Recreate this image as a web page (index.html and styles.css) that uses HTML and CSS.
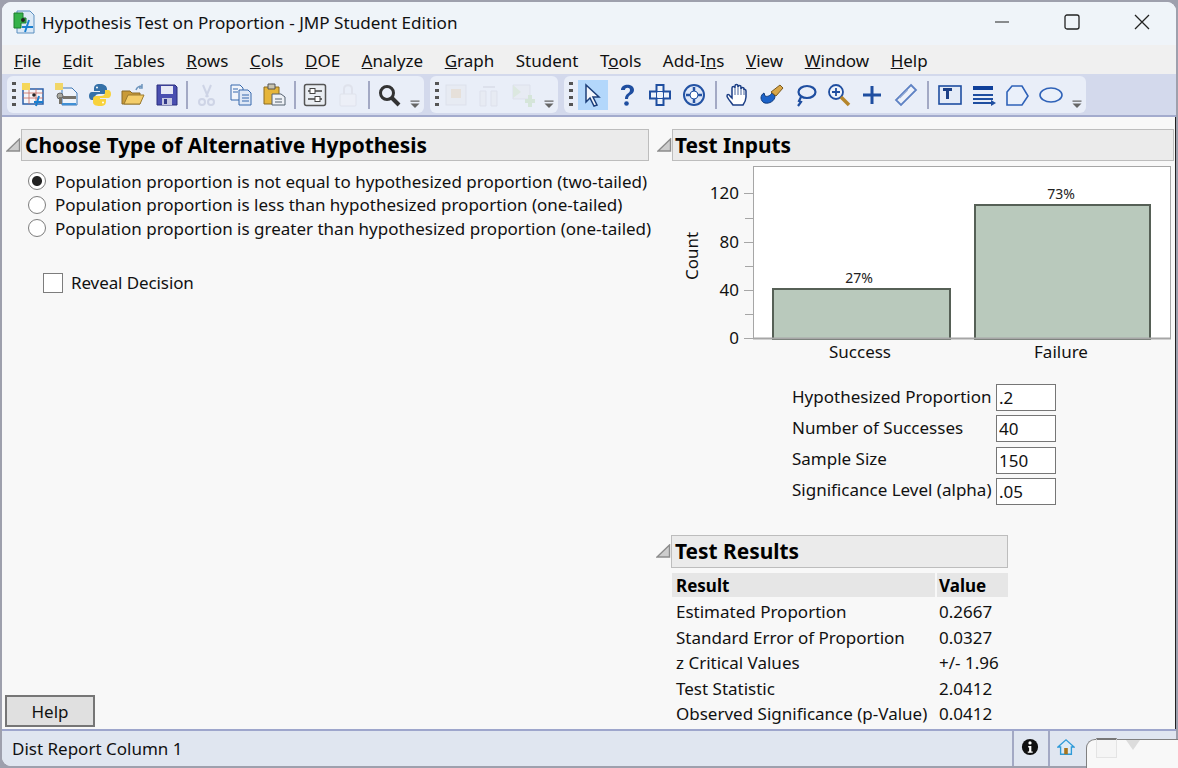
FILE: index.html
```html
<!DOCTYPE html>
<html lang="en">
<head>
<meta charset="utf-8">
<title>Hypothesis Test on Proportion - JMP Student Edition</title>
<link rel="stylesheet" href="styles.css">
</head>
<body>
<div class="window">
  <header class="titlebar">
    <svg class="app-icon" viewBox="0 0 24 24"><path d="M5 1h13l4 4v18H5z" fill="#dbe9f6" stroke="#5b8fc0"/><path d="M2 3h9v5h3v5H9v5H2z" fill="#35b24a" stroke="#1c7d2f"/><circle cx="11" cy="10" r="2" fill="#222"/><path d="M17 10l-4 12M10 17h11" stroke="#1a7fd0" stroke-width="2"/></svg>
    <span class="title">Hypothesis Test on Proportion - JMP Student Edition</span>
    <div class="winctl">
      <svg viewBox="0 0 16 16"><path d="M1 8h14" stroke="#222" stroke-width="1.200"/></svg>
      <svg viewBox="0 0 16 16"><rect x="1" y="1" width="14" height="14" rx="2" fill="none" stroke="#222" stroke-width="1.300"/></svg>
      <svg viewBox="0 0 16 16"><path d="M1 1l14 14M15 1L1 15" stroke="#222" stroke-width="1.300"/></svg>
    </div>
  </header>
  <nav class="menubar">
    <span><u>F</u>ile</span><span><u>E</u>dit</span><span><u>T</u>ables</span><span><u>R</u>ows</span><span><u>C</u>ols</span><span><u>D</u>OE</span><span><u>A</u>nalyze</span><span><u>G</u>raph</span><span>Student</span><span>T<u>o</u>ols</span><span>Add-I<u>n</u>s</span><span><u>V</u>iew</span><span><u>W</u>indow</span><span><u>H</u>elp</span>
  </nav>
  <div class="toolbar">
    <div class="tb-group g1">
      <i class="grip"></i>
      <span class="tool"><svg viewBox="0 0 24 24"><path d="M2 6h20v15H2z" fill="#f4f6fb" stroke="#2b5fa8" stroke-width="1.500"/><path d="M2 10h20M2 15h20M8 6v15M15 6v15" stroke="#c96a5a" stroke-width=".8"/><path d="M1 0h8v7H1z" fill="#f5d75a"/><circle cx="13" cy="12" r="1.800" fill="#222"/><path d="M18 13l-3 10M13 19h9" stroke="#1a7fd0" stroke-width="2"/></svg></span>
      <span class="tool"><svg viewBox="0 0 24 24"><path d="M8 5h10l5 5v12H8z" fill="#eef3fa" stroke="#3f78b5"/><path d="M1 0h8v7H1z" fill="#f1d668"/><circle cx="6" cy="13" r="3" fill="#a8a8a0" stroke="#666"/><path d="M5 14v7h3v-7zM9 13h13v3H9z" fill="#77736a"/><path d="M8 20h14v2H8z" fill="#3f8fd5"/></svg></span>
      <span class="tool"><svg viewBox="0 0 24 24"><path d="M12 1c-5 0-6 2-6 5v2h6v1H4c-2 0-3 2-3 4s1 4 3 4h3v-3c0-2 2-3 4-3h5c2 0 3-1 3-3V6c0-3-3-5-7-5z" fill="#3470a8"/><path d="M12 23c5 0 6-2 6-5v-2h-6v-1h8c2 0 3-2 3-4s-1-4-3-4h-3v3c0 2-2 3-4 3H8c-2 0-3 1-3 3v3c0 3 3 4 7 4z" fill="#f8d23c"/><circle cx="9" cy="4.500" r="1" fill="#fff"/><circle cx="15" cy="19.500" r="1" fill="#fff"/></svg></span>
      <span class="tool"><svg viewBox="0 0 24 24"><path d="M1 8h8l2 2h8v11H1z" fill="#c99a38" stroke="#8a6a28"/><path d="M3 21l4-9h16l-4 9z" fill="#f4cd6a" stroke="#9a7a30"/><path d="M15 7c1-3 3-4 6-4M21 1v4h-3" fill="none" stroke="#6e95bd" stroke-width="1.500"/></svg></span>
      <span class="tool"><svg viewBox="0 0 24 24"><path d="M2 2h18l2 2v18H2z" fill="#4a4fb0" stroke="#2b2f7c"/><path d="M6 3h12v8H6z" fill="#e6e8f5"/><path d="M7 15h10v7H7z" fill="#c5c7e0"/><path d="M9 16h3v5H9z" fill="#333a88"/></svg></span>
      <i class="sep"></i>
      <span class="tool dim"><svg viewBox="0 0 24 24"><path d="M8 2l5 12M16 2l-5 12" stroke="#c5cce0" stroke-width="2"/><circle cx="7" cy="19" r="3" fill="none" stroke="#c5cce0" stroke-width="2"/><circle cx="16" cy="19" r="3" fill="none" stroke="#c5cce0" stroke-width="2"/></svg></span>
      <span class="tool"><svg viewBox="0 0 24 24"><path d="M2 2h9l3 3v12H2z" fill="#f2f5fb" stroke="#3768ad"/><path d="M10 7h9l3 3v12H10z" fill="#dfe8f6" stroke="#3768ad"/><path d="M13 12h7M13 15h7M13 18h7M4 6h5M4 9h5" stroke="#3768ad"/></svg></span>
      <span class="tool"><svg viewBox="0 0 24 24"><path d="M2 4h15v17H2z" fill="#e6b53a" stroke="#8a6a20"/><path d="M6 1h7v5H6z" fill="#c9c4b0" stroke="#555"/><path d="M10 11h9l4 3v8H10z" fill="#eef1f6" stroke="#55606e"/><path d="M13 16h7M13 19h7" stroke="#55606e"/></svg></span>
      <i class="sep"></i>
      <span class="tool"><svg viewBox="0 0 24 24"><rect x="1.500" y="1.500" width="21" height="21" rx="2" fill="#e9edf2" stroke="#555" stroke-width="1.500"/><path d="M5 8h14M5 16h14" stroke="#444" stroke-width="1.500"/><rect x="7" y="5.500" width="5" height="5" fill="#fff" stroke="#444"/><rect x="12" y="13.500" width="5" height="5" fill="#fff" stroke="#444"/></svg></span>
      <span class="tool dim"><svg viewBox="0 0 24 24"><rect x="4" y="11" width="16" height="12" rx="1" fill="#edf0f7" stroke="#dcdfe8"/><path d="M8 11V6c0-5 8-5 8 0v5" fill="none" stroke="#dcdfe8" stroke-width="2"/></svg></span>
      <i class="sep"></i>
      <span class="tool"><svg viewBox="0 0 24 24"><circle cx="10" cy="10" r="6.500" fill="none" stroke="#333" stroke-width="3"/><path d="M15 15l7 7" stroke="#333" stroke-width="4"/></svg></span>
      <svg class="drop" viewBox="0 0 10 8"><path d="M1 1h8" stroke="#666"/><path d="M1 3h8L5 7z" fill="#666"/></svg>
    </div>
    <div class="tb-group g2">
      <i class="grip"></i>
      <span class="tool dim"><svg viewBox="0 0 24 24"><rect x="2" y="2" width="20" height="20" fill="#e7eaf2" stroke="#d9dde8"/><rect x="7" y="6" width="10" height="9" fill="#e6dcd0"/></svg></span>
      <span class="tool dim"><svg viewBox="0 0 24 24"><path d="M3 8h6v15H3zM14 8h6v15h-6z" fill="#e7eaf2" stroke="#d9dde8"/><path d="M6 4h12" stroke="#d9dde8" stroke-width="2"/></svg></span>
      <span class="tool dim"><svg viewBox="0 0 24 24"><path d="M2 2h17v14H2z" fill="#e7eaf2" stroke="#d9dde8"/><path d="M2 2l8 7-8 6z" fill="#d8e6d8"/><path d="M17 12h4v4h3v4h-3v4h-4v-4h-3v-4h3z" fill="#cfe3cf"/></svg></span>
      <svg class="drop" viewBox="0 0 10 8"><path d="M1 1h8" stroke="#666"/><path d="M1 3h8L5 7z" fill="#666"/></svg>
    </div>
    <div class="tb-group g3">
      <i class="grip"></i>
      <span class="tool selected"><svg viewBox="0 0 24 24"><path d="M5 2v17l4-4 4 8 3-1-4-8h6z" fill="#f4f6fb" stroke="#1c3f7a" stroke-width="1.500"/></svg></span>
      <span class="tool"><svg viewBox="0 0 24 24"><path d="M6 7c0-7 13-7 13 0 0 5-6 4-6 9h-3c0-6 5-5 5-9 0-3-5-3-5 0z" fill="#1f4ea0"/><circle cx="11.500" cy="20.500" r="2.300" fill="#1f4ea0"/></svg></span>
      <span class="tool"><svg viewBox="0 0 24 24"><path d="M8.500 2h7v6.500H22v7h-6.500V22h-7v-6.500H2v-7h6.500z" fill="#eef3fb" stroke="#1f4ea0" stroke-width="2"/><path d="M8.500 8.500h7v7h-7z" fill="none" stroke="#1f4ea0"/></svg></span>
      <span class="tool"><svg viewBox="0 0 24 24"><circle cx="12" cy="12" r="10" fill="#dfe8f8" stroke="#2453a4" stroke-width="2"/><path d="M12 4v16M4 12h16" stroke="#2453a4" stroke-width="2.500"/><circle cx="12" cy="12" r="4" fill="#fff" stroke="#2453a4"/></svg></span>
      <i class="sep wide"></i>
      <span class="tool"><svg viewBox="0 0 24 24"><path d="M7 22C5 19 1 15 1 13c0-2 2-2 3 0l2 2V5c0-2 3-2 3 0V3c0-2 3-2 3 0v1c0-2 3-2 3 0v2c0-2 3-2 3 0v1c0-1 2-1 2 1v6c0 3-1 5-3 8z" fill="#fff" stroke="#1d3f86" stroke-width="1.500"/><path d="M9 5v7M12 3v9M15 4v8M18 6v6" stroke="#1d3f86" stroke-width=".8"/></svg></span>
      <span class="tool"><svg viewBox="0 0 24 24"><path d="M1 15c0-2 1-4 3-5l1 3c2 1 5 0 7-3l3 3c0 5-6 8-10 7-2 0-4-3-4-5z" fill="#1c62c8" stroke="#103a7a"/><path d="M11 9l9-7 3 3-7 8z" fill="#d8a648" stroke="#7a5a20"/></svg></span>
      <span class="tool"><svg viewBox="0 0 24 24"><ellipse cx="14" cy="9" rx="8.500" ry="6" fill="none" stroke="#1f4ea0" stroke-width="2.200"/><path d="M8 14l-2 4 2 1-3 4" fill="none" stroke="#1f4ea0" stroke-width="2.200"/></svg></span>
      <span class="tool"><svg viewBox="0 0 24 24"><circle cx="9" cy="9" r="7" fill="#eef3fb" stroke="#1f4ea0" stroke-width="1.800"/><path d="M9 5v8M5 9h8" stroke="#1f4ea0" stroke-width="1.800"/><path d="M14 14l8 8" stroke="#b5862c" stroke-width="3.500"/></svg></span>
      <span class="tool"><svg viewBox="0 0 24 24"><path d="M12 3v18M3 12h18" stroke="#1f4ea0" stroke-width="3"/></svg></span>
      <span class="tool"><svg viewBox="0 0 24 24"><path d="M17 2l5 5L7 22l-5-5z" fill="#eef2fa" stroke="#5f82c4" stroke-width="1.800"/><path d="M5.500 15l8-8" stroke="#8fa6d2" stroke-width="1.200"/></svg></span>
      <i class="sep wide"></i>
      <span class="tool"><svg viewBox="0 0 24 24"><rect x="1" y="3" width="22" height="18" fill="#e4ebf7" stroke="#1f4ea0" stroke-width="1.600"/><path d="M5 5h9v3h-3v8H8V8H5z" fill="#1b3f86"/></svg></span>
      <span class="tool"><svg viewBox="0 0 24 24"><path d="M1 3h20v4H1z" fill="#0f3f9a"/><path d="M1 11h20v2H1zM1 15h20v2H1zM1 19h19v2H1z" fill="#1f4ea0"/><path d="M19 17l5 3-5 3z" fill="#1f4ea0"/></svg></span>
      <span class="tool"><svg viewBox="0 0 24 24"><path d="M2 22V9l5-6h10l6 10-6 9z" fill="#eaf0fa" stroke="#2f62b8" stroke-width="1.600"/></svg></span>
      <span class="tool"><svg viewBox="0 0 24 24"><ellipse cx="12" cy="12" rx="11" ry="7" fill="#eaf0fa" stroke="#2f62b8" stroke-width="1.600"/></svg></span>
      <svg class="drop" viewBox="0 0 10 8"><path d="M1 1h8" stroke="#666"/><path d="M1 3h8L5 7z" fill="#666"/></svg>
    </div>
  </div>
  <main class="content">
    <section class="left">
      <div class="outline">
        <svg class="disclosure" viewBox="0 0 15 14"><path d="M13.500 1v12H1z" fill="#cdcdcd" stroke="#8c8c8c" stroke-width="1.400"/></svg>
        <h2 class="heading">Choose Type of Alternative Hypothesis</h2>
      </div>
      <div class="radios">
        <label class="radio"><i class="dot on"></i>Population proportion is not equal to hypothesized proportion (two-tailed)</label>
        <label class="radio"><i class="dot"></i>Population proportion is less than hypothesized proportion (one-tailed)</label>
        <label class="radio"><i class="dot"></i>Population proportion is greater than hypothesized proportion (one-tailed)</label>
      </div>
      <label class="check"><i class="box"></i>Reveal Decision</label>
      <button class="help">Help</button>
    </section>
    <section class="right">
      <div class="outline inputs-head">
        <svg class="disclosure" viewBox="0 0 15 14"><path d="M13.500 1v12H1z" fill="#cdcdcd" stroke="#8c8c8c" stroke-width="1.400"/></svg>
        <h2 class="heading">Test Inputs</h2>
      </div>
      <svg class="chart" viewBox="0 0 502 204">
        <rect x="81.500" y="1.500" width="417" height="172" fill="#fff" stroke="#a6a6a6"/>
        <rect x="101" y="124" width="177" height="50" fill="#b9c9bc" stroke="#566056" stroke-width="2"/>
        <rect x="303" y="40" width="175" height="134" fill="#b9c9bc" stroke="#566056" stroke-width="2"/>
        <path d="M72 28.500h9M72 77.500h9M72 125.500h9M72 173.500h427M81 53.500h-8M81 101.500h-8M81 149.500h-8" stroke="#a6a6a6" fill="none"/>
        <path d="M81 173.500h418" stroke="#a6a6a6" stroke-width="2"/>
        <g class="axis">
          <text x="67" y="34" text-anchor="end">120</text>
          <text x="67" y="83" text-anchor="end">80</text>
          <text x="67" y="131" text-anchor="end">40</text>
          <text x="67" y="179" text-anchor="end">0</text>
          <text x="188" y="193" text-anchor="middle">Success</text>
          <text x="389" y="193" text-anchor="middle">Failure</text>
          <text transform="translate(26 91) rotate(-90)" text-anchor="middle">Count</text>
        </g>
        <g class="pct">
          <text x="187" y="118" text-anchor="middle">27%</text>
          <text x="389" y="34" text-anchor="middle">73%</text>
        </g>
      </svg>
      <div class="inputs">
        <span>Hypothesized Proportion</span><input class="field" value=".2">
        <span>Number of Successes</span><input class="field" value="40">
        <span>Sample Size</span><input class="field" value="150">
        <span>Significance Level (alpha)</span><input class="field" value=".05">
      </div>
      <div class="outline results-head">
        <svg class="disclosure" viewBox="0 0 15 14"><path d="M13.500 1v12H1z" fill="#cdcdcd" stroke="#8c8c8c" stroke-width="1.400"/></svg>
        <h2 class="heading">Test Results</h2>
      </div>
      <table class="results">
        <thead><tr><th>Result</th><th>Value</th></tr></thead>
        <tbody>
          <tr><td>Estimated Proportion</td><td>0.2667</td></tr>
          <tr><td>Standard Error of Proportion</td><td>0.0327</td></tr>
          <tr><td>z Critical Values</td><td>+/- 1.96</td></tr>
          <tr><td>Test Statistic</td><td>2.0412</td></tr>
          <tr><td>Observed Significance (p-Value)</td><td>0.0412</td></tr>
        </tbody>
      </table>
    </section>
  </main>
  <footer class="statusbar">
    <span class="status-text">Dist Report Column 1</span>
    <i class="status-sep"></i>
    <svg class="status-icon info" viewBox="0 0 20 20"><circle cx="10" cy="10" r="9" fill="#111"/><circle cx="10" cy="5.500" r="1.800" fill="#fff"/><path d="M8 9h3.500v6H13v1.500H7.500V15H9v-4.500H8z" fill="#fff"/></svg>
    <i class="status-sep"></i>
    <svg class="status-icon home" viewBox="0 0 20 20"><path d="M1 10L10 2l9 8h-3v8H4v-8z" fill="#dbeaf6" stroke="#2f9bd8" stroke-width="1.500"/><path d="M8 11h4v7H8z" fill="#a8741c"/></svg>
  </footer>
</div>
<div class="floating"><i class="fl-box"></i><i class="fl-arrow"></i></div>
</body>
</html>
```
FILE: styles.css
```css
* { box-sizing: border-box; }
html, body { margin: 0; height: 100%; }
body {
  width: 1178px;
  height: 768px;
  overflow: hidden;
  padding: 2px;
  background: #9ea0ad;
  font-family: "Noto Sans", sans-serif;
  font-size: 17px;
  color: #111;
  position: relative;
}
.window {
  display: flex;
  flex-direction: column;
  height: 100%;
  border-radius: 9px;
  overflow: hidden;
  background: #f8f8f8;
}
i { display: block; font-style: normal; }

.titlebar {
  height: 43px;
  flex: none;
  display: flex;
  align-items: center;
  padding: 0 0 3px 10px;
  background: #eff4f9;
}
.app-icon { width: 24px; height: 24px; flex: none; }
.title { margin-left: 6px; font-size: 17.1px; }
.winctl { margin-left: auto; display: flex; align-items: center; gap: 54px; padding-right: 26.5px; }
.winctl svg { width: 16px; height: 16px; display: block; }

.menubar {
  height: 29px;
  flex: none;
  display: flex;
  align-items: center;
  gap: 21.5px;
  padding: 1px 0 0 12px;
  background: #f0f0f0;
  font-size: 17px;
}

.toolbar {
  height: 43px;
  flex: none;
  display: flex;
  align-items: center;
  gap: 6px;
  padding-left: 5px;
  background: #d3d9ec;
  border-bottom: 2px solid #a3abcd;
}
.tb-group {
  height: 37px;
  display: flex;
  align-items: center;
  padding-left: 5px;
  border-radius: 6px;
  background: #e9eef8;
}
.g1 { width: 417px; }
.g2 { width: 128px; }
.g3 { width: 522px; }
.grip {
  width: 4px;
  height: 26px;
  flex: none;
  background: repeating-linear-gradient(#555 0 3px, transparent 3px 7px);
}
.g3 .grip { margin-right: 3px; }
.tool {
  width: 33.5px;
  height: 30px;
  flex: none;
  display: flex;
  align-items: center;
  justify-content: center;
}
.tool svg { width: 24px; height: 24px; display: block; }
.tool.dim { opacity: .75; }
.tool.selected { width: 30px; margin: 0 2px; background: #b3d7fb; }
.sep { width: 2px; height: 28px; flex: none; margin: 0 2.5px; background: #a3a9c4; }
.sep.wide { margin: 0 4.5px; }
.drop {
  width: 12px;
  height: 9px;
  margin: 20px 3px 0 auto;
  flex: none;
}

.content {
  flex: 1;
  min-height: 0;
  display: grid;
  grid-template-columns: 651px minmax(0, 1fr);
  padding: 12px 1px 2px 4px;
  border-right: 1px solid #222;
}
.left, .right { display: flex; flex-direction: column; min-height: 0; }

.outline { display: flex; align-items: stretch; height: 32px; flex: none; }
.disclosure {
  width: 15px;
  height: 14px;
  align-self: center;
  flex: none;
  display: block;
}
.heading {
  flex: 1;
  margin: 0;
  padding-left: 3px;
  font-size: 20.9px;
  line-height: 30px;
  font-weight: 700;
  color: #000;
  background: #ebebeb;
  border: 1px solid #bdbdbd;
}
.left .heading { margin-right: 8px; }
.inputs-head .heading { padding-left: 2px; }

.radios { display: flex; flex-direction: column; padding: 8.500px 0 0 22px; }
.radio { display: flex; align-items: center; height: 23.6px; gap: 9px; font-size: 17px; }
.dot {
  width: 18px;
  height: 18px;
  border-radius: 50%;
  background: #fff;
  border: 1px solid #7d7d7d;
  flex: none;
}
.dot.on { background: radial-gradient(circle, #222 0 4.5px, #fff 5.5px); }
.check { display: flex; align-items: center; gap: 8px; margin: 30.5px 0 0 37px; height: 24px; font-size: 17px; letter-spacing: -.1px; }
.box { width: 20px; height: 20px; background: #fff; border: 1px solid #7d7d7d; flex: none; }
.help {
  margin-top: auto;
  margin-left: -1px;
  width: 90px;
  height: 32px;
  padding: 0;
  background: #e0e0e0;
  border: 2px solid #767676;
  font: inherit;
  color: #111;
}

.chart { width: 502px; height: 204px; margin: 4px 0 0 15px; flex: none; display: block; }
.axis text { font-size: 17px; fill: #111; }
.pct text { font-size: 14px; fill: #222; }

.inputs {
  display: grid;
  grid-template-columns: 204px 60px;
  grid-auto-rows: 27px;
  row-gap: 4.33px;
  align-items: center;
  margin: 15px 0 0 135px;
  font-size: 17px;
}
.inputs span { margin-bottom: 3px; }
.field {
  width: 60px;
  height: 27px;
  padding: 0 2px;
  background: #fff;
  border: 1px solid #767676;
  font: inherit;
  color: #111;
}
.results-head { width: 352px; height: 33px; margin: 30px 0 0 -1px; }
.results { width: 336px; margin: 5px 0 0 15px; border-collapse: separate; border-spacing: 0; font-size: 17px; }
.results th {
  height: 24px;
  padding: 1px 0 0 4px;
  text-align: left;
  font-weight: 700;
  color: #000;
  background: #e6e6e6;
}
.results th:first-child { width: 263px; }
.results th + th { border-left: 2px solid #f8f8f8; padding-left: 2px; }
.results td { height: 25.5px; padding: 0 0 0 4px; }
.results td + td { padding-left: 4px; }
.results tbody tr:first-child td { height: 27.5px; padding-top: 2px; }

.statusbar {
  height: 37px;
  flex: none;
  display: flex;
  align-items: center;
  padding: 0 0 0 10px;
  background: #e0e6f0;
  border-top: 2px solid #9ea6cc;
}
.status-text { margin-right: auto; font-size: 17px; }
.status-sep { width: 2px; height: 100%; flex: none; background: #a3a9c4; margin: 0 7px; }
.status-icon { width: 18px; height: 18px; flex: none; margin-top: -3px; }
.status-icon.info { margin-right: 2px; }
.status-icon.home { margin-right: 101px; }

.floating {
  position: absolute;
  right: 0;
  bottom: 0;
  width: 92px;
  height: 29px;
  background: #f8f8f8;
  border: 1px solid #808080;
  border-width: 1px 0 0 1px;
  border-radius: 9px 0 0 0;
}
.fl-box {
  position: absolute;
  left: 9px;
  top: -2px;
  width: 21px;
  height: 20px;
  border: 1px solid #e4e4e4;
  border-top: 2px solid #777;
  background: #f5f5f5;
}
.fl-arrow {
  position: absolute;
  left: 39px;
  top: 0;
  border: 7px solid transparent;
  border-top: 10px solid #dcdcdc;
}
```
